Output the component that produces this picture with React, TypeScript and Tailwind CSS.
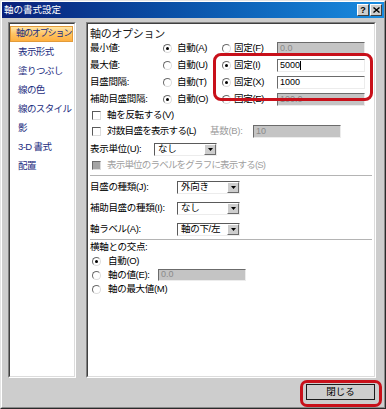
import React from "react";

const FONT = "font-['Liberation_Sans','Noto_Sans_CJK_JP',sans-serif]";

const Radio = ({ on = false }: { on?: boolean }) => (
  <span className="w-[9px] h-[9px] shrink-0 rounded-full bg-white border border-t-[#6b6b6b] border-l-[#6b6b6b] border-r-[#dcdcdc] border-b-[#dcdcdc] flex items-center justify-center">
    {on && <span className="w-[3px] h-[3px] rounded-full bg-black" />}
  </span>
);

const Check = ({ disabled = false }: { disabled?: boolean }) =>
  disabled ? (
    <span className="w-[9px] h-[9px] shrink-0 bg-[#a4a4a4] border border-t-[#6b6b6b] border-l-[#6b6b6b] border-r-[#dcdcdc] border-b-[#dcdcdc]" />
  ) : (
    <span className="w-[9px] h-[9px] shrink-0 bg-white border border-t-[#5a5a5a] border-l-[#5a5a5a] border-r-[#dcdcdc] border-b-[#dcdcdc]" />
  );

const TextBox = ({
  value,
  disabled = false,
  caret = false,
  className = "",
}: {
  value: string;
  disabled?: boolean;
  caret?: boolean;
  className?: string;
}) => (
  <div
    className={`flex items-center pl-[2px] text-[9px] tracking-normal border border-t-[#6b6b6b] border-l-[#6b6b6b] border-r-[#ececec] border-b-[#ececec] ${
      disabled ? "bg-[#c4c4c4] text-[#8a8a8a]" : "bg-white text-black"
    } ${className}`}
  >
    <span>{value}</span>
    {caret && <span className="w-px h-[9px] bg-black" />}
  </div>
);

const Select = ({ value, className = "" }: { value: string; className?: string }) => (
  <div
    className={`flex items-stretch bg-white border border-t-[#5a5a5a] border-l-[#5a5a5a] border-r-[#ececec] border-b-[#ececec] ${className}`}
  >
    <span className="flex-1 flex items-center pl-[3px] text-[9.5px] text-black whitespace-nowrap overflow-hidden">
      {value}
    </span>
    <span className="w-[12px] bg-[#cdcdcd] border border-t-white border-l-white border-r-[#6b6b6b] border-b-[#6b6b6b] flex items-center justify-center">
      <svg width="5" height="3" viewBox="0 0 5 3">
        <path d="M0 0h5L2.5 3z" fill="#000" />
      </svg>
    </span>
  </div>
);

const navItems = ["表示形式", "塗りつぶし", "線の色", "線のスタイル", "影", "3-D 書式", "配置"];

export default function App() {
  return (
    <div
      className={`relative w-[386px] h-[409px] bg-[#cdcdcd] border border-t-[#e4e4e4] border-l-[#e4e4e4] border-r-[#2a2a2a] border-b-[#2a2a2a] ${FONT}`}
    >
      <div className="h-full flex flex-col border border-t-white border-l-white border-r-[#8a8a8a] border-b-[#8a8a8a]">
        {/* title bar */}
        <div className="h-[16px] flex items-center justify-between pl-[2px] pr-[2px] bg-linear-to-r from-[#0a1f7a] to-[#1a8ce0]">
          <span className="text-white text-[9.5px] leading-none">軸の書式設定</span>
          <div className="flex gap-[1px]">
            <span className="w-[12px] h-[12px] bg-[#cdcdcd] border border-t-white border-l-white border-r-[#404040] border-b-[#404040] flex items-center justify-center text-[9px] font-bold text-black leading-none">
              ?
            </span>
            <span className="w-[12px] h-[12px] bg-[#cdcdcd] border border-t-white border-l-white border-r-[#404040] border-b-[#404040] flex items-center justify-center">
              <svg width="7" height="6" viewBox="0 0 7 6">
                <path d="M0.5 0.5l6 5M6.5 0.5l-6 5" stroke="#000" strokeWidth="1.4" />
              </svg>
            </span>
          </div>
        </div>

        <div className="flex mt-[4px] pl-[6px] gap-[10px] h-[356px]">
          {/* nav */}
          <div className="w-[68px] h-full border border-t-[#808080] border-l-[#808080] border-r-white border-b-white">
            <div className="h-full bg-white border border-t-[#404040] border-l-[#404040] border-r-[#dcdcdc] border-b-[#dcdcdc] flex flex-col">
              <div className="h-[19px] flex items-center">
                <div className="h-[16px] w-[63px] flex items-center pl-[5px] bg-linear-to-b from-[#ffe6a6] via-[#ffc462] to-[#ffb040] border border-[#e39b3a] text-[#1c2d80] text-[9px] tracking-[-1.1px] whitespace-nowrap">
                  軸のオプション
                </div>
              </div>
              {navItems.map((t) => (
                <div
                  key={t}
                  className="h-[19px] flex items-center pl-[8px] text-[#1c2d80] text-[9.5px] tracking-[-0.6px] whitespace-nowrap"
                >
                  {t}
                </div>
              ))}
            </div>
          </div>

          {/* main panel */}
          <div className="relative w-[290px] h-full border border-t-[#808080] border-l-[#808080] border-r-white border-b-white">
            <div className="h-full bg-white border border-t-[#404040] border-l-[#404040] border-r-[#dcdcdc] border-b-[#dcdcdc] pl-[2px] pt-[4px] flex flex-col text-[9.5px] tracking-[-0.3px] text-black">
              <div className="h-[12px] flex items-center text-[11px] text-[#1a1a1a]">軸のオプション</div>

              {[
                ["最小値:", "自動(A)", true, "固定(F)", false, "0.0", true, false],
                ["最大値:", "自動(U)", false, "固定(I)", true, "5000", false, true],
                ["目盛間隔:", "自動(T)", false, "固定(X)", true, "1000", false, false],
                ["補助目盛間隔:", "自動(O)", true, "固定(E)", false, "100.0", true, false],
              ].map(([label, a, aOn, f, fOn, val, dis, caret]) => (
                <div key={label as string} className="h-[17px] flex items-center">
                  <span className="w-[73px] whitespace-nowrap">{label as string}</span>
                  <span className="w-[59px] flex items-center">
                    <Radio on={aOn as boolean} />
                    <span className="ml-[5px] whitespace-nowrap">{a as string}</span>
                  </span>
                  <span className="w-[55px] flex items-center">
                    <Radio on={fOn as boolean} />
                    <span className="ml-[3px] whitespace-nowrap">{f as string}</span>
                  </span>
                  <TextBox
                    value={val as string}
                    disabled={dis as boolean}
                    caret={caret as boolean}
                    className="w-[88px] h-[13px]"
                  />
                </div>
              ))}

              <div className="h-[15px] flex items-center pl-[2px]">
                <Check />
                <span className="ml-[6px]">軸を反転する(V)</span>
              </div>
              <div className="h-[17px] flex items-center pl-[2px]">
                <Check />
                <span className="ml-[6px] w-[103px] whitespace-nowrap tracking-[-0.7px]">対数目盛を表示する(L)</span>
                <span className="w-[43px] text-[#9a9a9a] whitespace-nowrap">基数(B):</span>
                <TextBox value="10" disabled className="w-[88px] h-[13px]" />
              </div>
              <div className="h-[19px] flex items-center">
                <span className="w-[64px] whitespace-nowrap">表示単位(U):</span>
                <Select value="なし" className="w-[63px] h-[13px]" />
              </div>
              <div className="h-[13px] flex items-center pl-[2px]">
                <Check disabled />
                <span className="ml-[6px] text-[#a0a0a0] whitespace-nowrap tracking-[-0.8px]">
                  表示単位のラベルをグラフに表示する(S)
                </span>
              </div>

              <div className="mt-[3px] mr-[2px] border-t border-t-[#b4b4b4] border-b border-b-white" />

              <div className="mt-[3px] flex flex-col gap-[7px]">
                {[
                  ["目盛の種類(J):", "外向き"],
                  ["補助目盛の種類(I):", "なし"],
                  ["軸ラベル(A):", "軸の下/左"],
                ].map(([l, v]) => (
                  <div key={l} className="h-[14px] flex items-center">
                    <span className="w-[87px] whitespace-nowrap">{l}</span>
                    <Select value={v} className="w-[63px] h-[13px]" />
                  </div>
                ))}
              </div>

              <div className="mt-[3px] mr-[2px] border-t border-t-[#b4b4b4] border-b border-b-white" />

              <div className="h-[13px] flex items-center">横軸との交点:</div>
              <div className="h-[14px] flex items-center pl-[2px]">
                <Radio on />
                <span className="ml-[7px]">自動(O)</span>
              </div>
              <div className="h-[14px] flex items-center pl-[2px]">
                <Radio />
                <span className="ml-[7px] w-[50px] whitespace-nowrap">軸の値(E):</span>
                <TextBox value="0.0" disabled className="w-[88px] h-[12px]" />
              </div>
              <div className="h-[14px] flex items-center pl-[2px]">
                <Radio />
                <span className="ml-[7px]">軸の最大値(M)</span>
              </div>
            </div>

            {/* highlight around fixed values */}
            <div className="absolute left-[126px] top-[30px] w-[160px] h-[48px] rounded-[8px] border-[3px] border-[#c8101a]" />
          </div>
        </div>

        {/* bottom */}
        <div className="flex justify-end pr-[9px] mt-[6px]">
          <button className="w-[69px] h-[16px] bg-[#cdcdcd] border border-[#1a1a1a] flex items-center justify-center text-[9.5px] text-black">
            閉じる
          </button>
        </div>
      </div>

      <div className="absolute left-[299px] top-[379px] w-[82px] h-[27px] rounded-[7px] border-[3px] border-[#c8101a]" />
    </div>
  );
}
